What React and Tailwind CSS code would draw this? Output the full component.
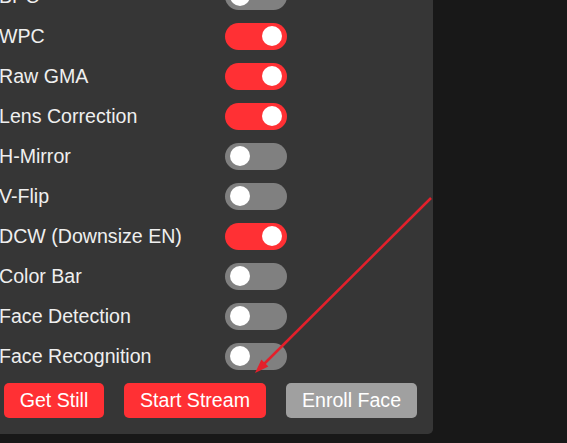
import React from "react";

const settings = [
  { label: "BPC", on: false },
  { label: "WPC", on: true },
  { label: "Raw GMA", on: true },
  { label: "Lens Correction", on: true },
  { label: "H-Mirror", on: false },
  { label: "V-Flip", on: false },
  { label: "DCW (Downsize EN)", on: true },
  { label: "Color Bar", on: false },
  { label: "Face Detection", on: false },
  { label: "Face Recognition", on: false },
];

const Toggle = ({ on }) => (
  <div
    className={
      "relative w-[62px] h-[27px] rounded-full " +
      (on ? "bg-[#ff3034]" : "bg-[#808080]")
    }
  >
    <div
      className={
        "absolute top-[3.5px] size-[20px] rounded-full bg-white " +
        (on ? "left-[37px]" : "left-[5px]")
      }
    />
  </div>
);

const App = () => {
  return (
    <div
      className="relative w-[567px] h-[443px] overflow-hidden bg-[#181818] text-[#efefef]"
      style={{ fontFamily: '"Liberation Sans", Arial, sans-serif' }}
    >
      <div className="w-[433px] h-[434px] bg-[#363636] rounded-br-[5px] overflow-hidden">
        <div className="-mt-[24px]">
          {settings.map((s) => (
            <div key={s.label} className="flex items-center h-[40px]">
              <div className="w-[226px] pt-[2px] -ml-[1px] text-[19.6px] leading-none whitespace-nowrap">
                {s.label}
              </div>
              <Toggle on={s.on} />
            </div>
          ))}
        </div>
        <div className="flex gap-[20px] mt-[7px] pl-[4px]">
          <button className="w-[100px] h-[35px] rounded-[5px] bg-[#ff3034] text-white text-[19.6px]">
            Get Still
          </button>
          <button className="w-[142px] h-[35px] rounded-[5px] bg-[#ff3034] text-white text-[19.6px]">
            Start Stream
          </button>
          <button className="w-[131px] h-[35px] rounded-[5px] bg-[#a0a0a0] text-white text-[19.6px]">
            Enroll Face
          </button>
        </div>
      </div>
      <svg
        className="absolute inset-0 pointer-events-none"
        width="567"
        height="443"
        viewBox="0 0 567 443"
      >
        <line
          x1="431"
          y1="198"
          x2="262"
          y2="366"
          stroke="#e3202b"
          strokeWidth="2.5"
        />
        <polygon points="255,373 268.4,366.6 261.4,359.6" fill="#e3202b" />
      </svg>
    </div>
  );
};

export default App;
